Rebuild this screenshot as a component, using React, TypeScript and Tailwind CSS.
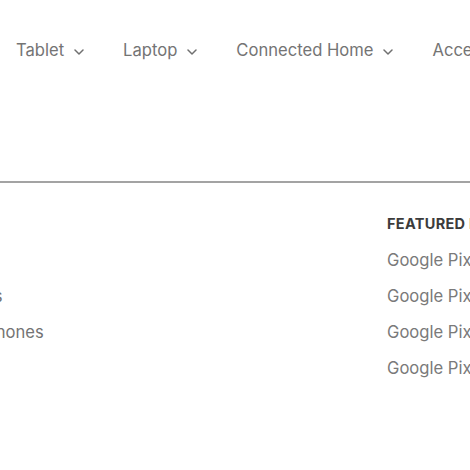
import React from "react";

const Chevron = () => (
  <svg width="10" height="6" viewBox="0 0 10 6" className="ml-[10px] mt-[3px]" fill="none">
    <path d="M1 1 L5 5 L9 1" stroke="#707070" strokeWidth="1.5" strokeLinecap="round" strokeLinejoin="round" />
  </svg>
);

const navItems = ["Tablet", "Laptop", "Connected Home", "Accessories"];

export default function App() {
  return (
    <div
      className="w-[470px] h-[470px] overflow-hidden bg-white"
      style={{ fontFamily: "Inter, 'Noto Sans', sans-serif" }}
    >
      <div className="flex items-center gap-[39px] pl-[16px] pt-[38px] h-[62px] whitespace-nowrap">
        {navItems.map((n) => (
          <div key={n} className="flex items-center text-[16.6px] text-[#747474] shrink-0">
            <span>{n}</span>
            <Chevron />
          </div>
        ))}
      </div>
      <div className="mt-[119px] h-[2px] bg-[#a3a3a3]" />
      <div className="flex pt-[23px] whitespace-nowrap">
        <div className="flex flex-col -ml-[56px] w-[443px] shrink-0 text-[16.6px] text-[#747474]">
          <div className="h-[36px] flex items-center text-transparent">Shop all</div>
          <div className="h-[36px] flex items-center text-transparent">x</div>
          <div className="h-[36px] flex items-center">Mounts</div>
          <div className="h-[36px] flex items-center">Headphones</div>
          <div className="h-[36px] flex items-center text-transparent">Cases</div>
        </div>
        <div className="flex flex-col shrink-0">
          <div className="h-[36px] flex items-center text-[14.5px] font-bold text-[#3c3c3c] tracking-[0.3px]">FEATURED PRODUCTS</div>
          {["Google Pixel 7", "Google Pixel 7 Pro", "Google Pixel 6a", "Google Pixel Buds"].map((t) => (
            <div key={t} className="h-[36px] flex items-center text-[16.6px] text-[#7a7a7a]">{t}</div>
          ))}
        </div>
      </div>
    </div>
  );
}
